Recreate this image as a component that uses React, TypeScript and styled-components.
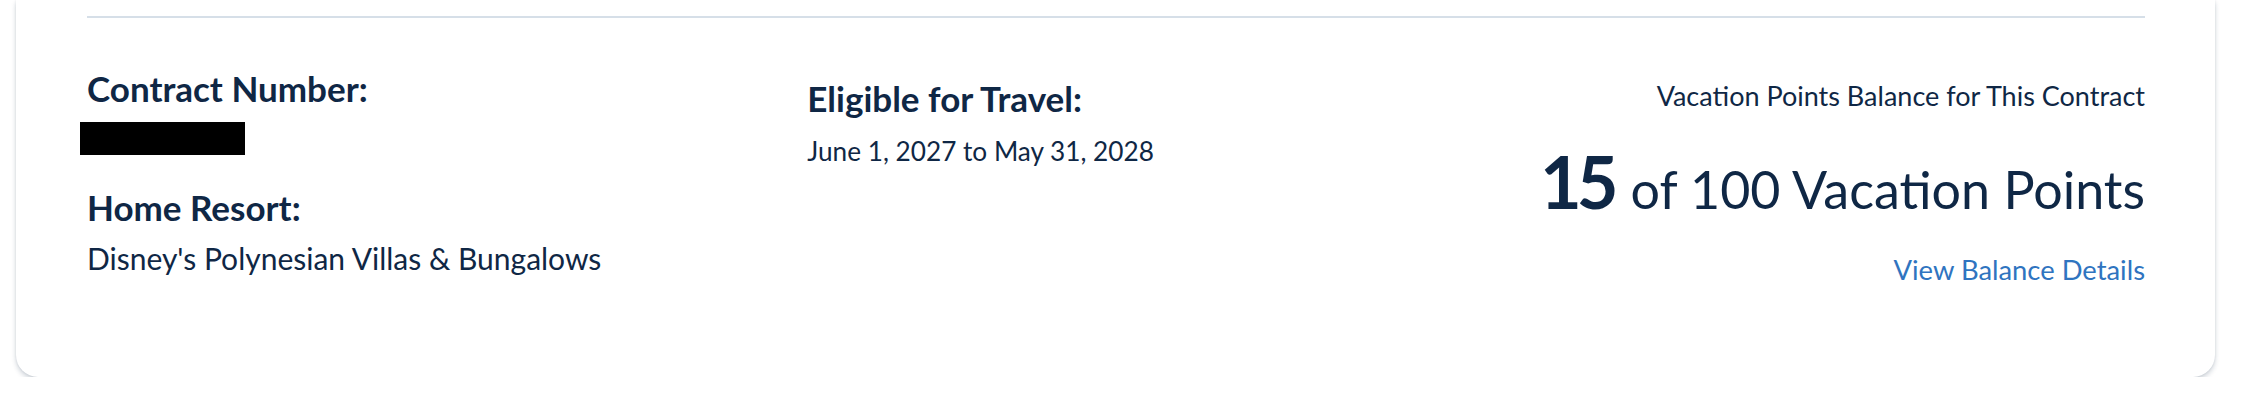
import React from "react";
import styled, { createGlobalStyle } from "styled-components";

const GlobalStyle = createGlobalStyle`
  html, body {
    margin: 0;
    padding: 0;
    background: #ffffff;
  }
  body {
    font-family: Lato, "Open Sans", "Liberation Sans", sans-serif;
    color: #0f2745;
  }
`;

const Page = styled.div`
  padding: 0 27px 0 16px;
`;

const Card = styled.section`
  background: #ffffff;
  border-radius: 0 0 22px 22px;
  box-shadow: 0 3px 5px rgba(15, 39, 69, 0.2), 0 0 2px rgba(15, 39, 69, 0.1);
  padding: 16px 70px 90px 71px;
`;

const Divider = styled.hr`
  margin: 0;
  border: none;
  height: 2px;
  background: #d6dfe8;
`;

const Details = styled.div`
  display: grid;
  grid-template-columns: 35% 1fr 1fr;
  align-items: start;
  padding-top: 49px;
`;

const Column = styled.div<{ $align?: "left" | "right"; $offset?: number }>`
  display: flex;
  flex-direction: column;
  align-items: ${(p) => (p.$align === "right" ? "flex-end" : "flex-start")};
  text-align: ${(p) => p.$align || "left"};
  padding-top: ${(p) => p.$offset || 0}px;
`;

const Label = styled.h3<{ $gap?: number }>`
  margin: 0 0 ${(p) => p.$gap ?? 0}px;
  font-size: 35px;
  font-weight: 700;
  line-height: 1.2;
`;

const Value = styled.p<{ $size?: number }>`
  margin: 0;
  font-size: ${(p) => p.$size || 30}px;
  font-weight: 400;
  line-height: 1.2;
`;

const Redacted = styled.div`
  width: 165px;
  height: 33px;
  margin: 0 0 31px -7px;
  background: #000;
`;

const Caption = styled.p`
  margin: 0 0 26px;
  font-size: 27px;
  line-height: 1.2;
`;

const Balance = styled.div`
  display: flex;
  align-items: baseline;
  gap: 17px;
  margin-bottom: 29px;
`;

const Available = styled.span`
  font-size: 72px;
  font-weight: 700;
  line-height: 1.2;
  letter-spacing: -5px;
`;

const Total = styled.span`
  font-size: 52px;
  font-weight: 400;
  line-height: 1.2;
`;

const DetailsLink = styled.a`
  font-size: 27.4px;
  line-height: 1.2;
  color: #2f74c0;
  text-decoration: none;
  cursor: pointer;
`;

export default function App() {
  return (
    <Page>
      <GlobalStyle />
      <Card>
        <Divider />
        <Details>
          <Column>
            <Label $gap={13}>Contract Number:</Label>
            <Redacted />
            <Label $gap={12}>Home Resort:</Label>
            <Value>Disney's Polynesian Villas &amp; Bungalows</Value>
          </Column>
          <Column $offset={10}>
            <Label $gap={17}>Eligible for Travel:</Label>
            <Value $size={26.2}>June 1, 2027 to May 31, 2028</Value>
          </Column>
          <Column $align="right" $offset={13}>
            <Caption>Vacation Points Balance for This Contract</Caption>
            <Balance>
              <Available>15</Available>
              <Total>of 100 Vacation Points</Total>
            </Balance>
            <DetailsLink>View Balance Details</DetailsLink>
          </Column>
        </Details>
      </Card>
    </Page>
  );
}
